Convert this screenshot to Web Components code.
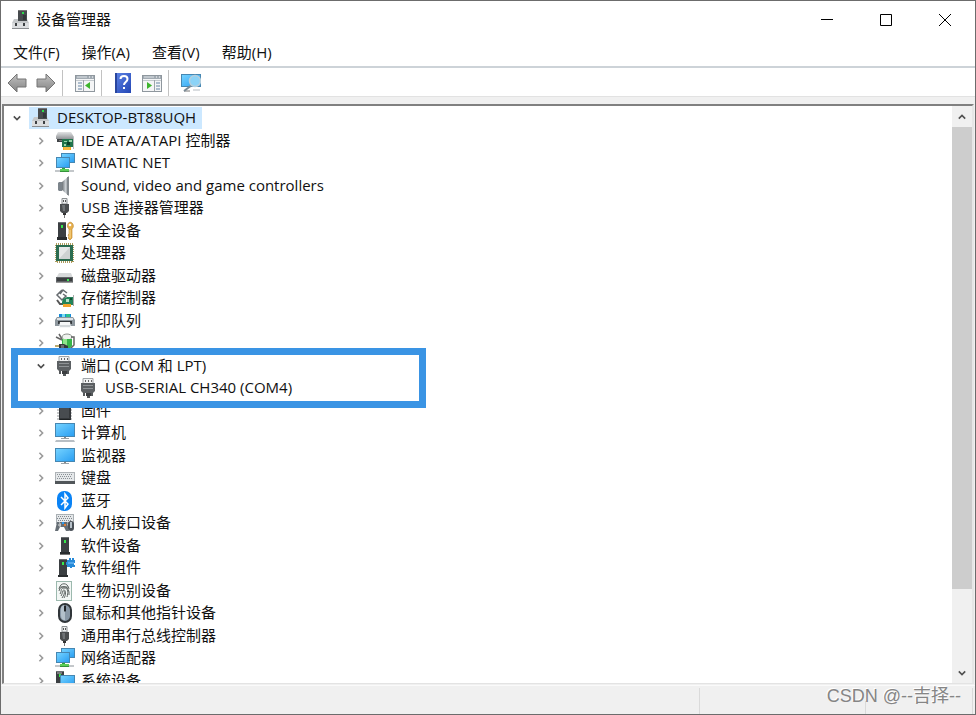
<!DOCTYPE html>
<html lang="zh-CN">
<head>
<meta charset="utf-8">
<title>设备管理器</title>
<style>
  html, body { height: 100%; margin: 0; }
  body { font: 15px/22px "Open Sans", "Noto Sans CJK SC", sans-serif; color: #111; overflow: hidden; }
</style>
</head>
<body>
<dm-window>
  <dm-titlebar slot="title">设备管理器</dm-titlebar>
  <dm-menubar slot="menu">
    <dm-menu>文件(F)</dm-menu>
    <dm-menu>操作(A)</dm-menu>
    <dm-menu>查看(V)</dm-menu>
    <dm-menu>帮助(H)</dm-menu>
  </dm-menubar>
  <dm-toolbar slot="tools"></dm-toolbar>
  <dm-tree>
    <dm-node icon="pc" open selected>DESKTOP-BT88UQH</dm-node>
    <dm-node depth="1" icon="ide">IDE ATA/ATAPI 控制器</dm-node>
    <dm-node depth="1" icon="net">SIMATIC NET</dm-node>
    <dm-node depth="1" icon="sound">Sound, video and game controllers</dm-node>
    <dm-node depth="1" icon="usb">USB 连接器管理器</dm-node>
    <dm-node depth="1" icon="security">安全设备</dm-node>
    <dm-node depth="1" icon="cpu">处理器</dm-node>
    <dm-node depth="1" icon="disk">磁盘驱动器</dm-node>
    <dm-node depth="1" icon="storage">存储控制器</dm-node>
    <dm-node depth="1" icon="printer">打印队列</dm-node>
    <dm-node depth="1" icon="battery">电池</dm-node>
    <dm-node depth="1" icon="port" open>端口 (COM 和 LPT)</dm-node>
    <dm-node depth="2" icon="port" leaf>USB-SERIAL CH340 (COM4)</dm-node>
    <dm-node depth="1" icon="firmware">固件</dm-node>
    <dm-node depth="1" icon="computer">计算机</dm-node>
    <dm-node depth="1" icon="monitor">监视器</dm-node>
    <dm-node depth="1" icon="keyboard">键盘</dm-node>
    <dm-node depth="1" icon="bluetooth">蓝牙</dm-node>
    <dm-node depth="1" icon="hid">人机接口设备</dm-node>
    <dm-node depth="1" icon="software">软件设备</dm-node>
    <dm-node depth="1" icon="component">软件组件</dm-node>
    <dm-node depth="1" icon="finger">生物识别设备</dm-node>
    <dm-node depth="1" icon="mouse">鼠标和其他指针设备</dm-node>
    <dm-node depth="1" icon="usb">通用串行总线控制器</dm-node>
    <dm-node depth="1" icon="net">网络适配器</dm-node>
    <dm-node depth="1" icon="system">系统设备</dm-node>
    <dm-highlight></dm-highlight>
  </dm-tree>
  <dm-statusbar slot="status"></dm-statusbar>
  <dm-watermark slot="mark">CSDN @--吉择--</dm-watermark>
</dm-window>

<script>
const defs = `<defs>
  <linearGradient id="blue" x1="0" y1="0" x2="1" y2="1"><stop stop-color="#74d2ff"/><stop offset="1" stop-color="#2b9ff2"/></linearGradient>
  <linearGradient id="gray" x1="0" y1="0" x2="0" y2="1"><stop stop-color="#e2e3e4"/><stop offset="1" stop-color="#909396"/></linearGradient>
  <linearGradient id="metal" x1="0" y1="0" x2="1" y2="0"><stop stop-color="#6d7378"/><stop offset=".5" stop-color="#c9ced2"/><stop offset="1" stop-color="#7c8287"/></linearGradient>
  <linearGradient id="arrow" x1="0" y1="0" x2="0" y2="1"><stop stop-color="#c4c4c4"/><stop offset=".5" stop-color="#a2a2a2"/><stop offset="1" stop-color="#858585"/></linearGradient>
  <linearGradient id="book" x1="0" y1="0" x2="1" y2="1"><stop stop-color="#5d83e6"/><stop offset="1" stop-color="#2346b4"/></linearGradient>
</defs>`;

const screen = (x, y, w, h) => `<rect x="${x}" y="${y}" width="${w}" height="${h}" fill="#4687b2"/><rect x="${x + 1}" y="${y + 1}" width="${w - 2}" height="${h - 2}" fill="url(#blue)"/>`;
const tower = (x, y, h) => `<rect x="${x}" y="${y}" width="8" height="${h}" fill="#3b3f42"/><path d="M${x} ${y}h8v1h-8z" fill="#6b6f72"/><rect x="${x + 3}" y="${y + 3}" width="2" height="3" fill="#35e84a"/>`;
const panel = `<rect x=".5" y="2.500" width="19" height="16" fill="#f4f5f6" stroke="#8f979e"/><path d="M1 3h18v3H1z" fill="#a2abb3"/><path d="M2 4h10" stroke="#dfe4e8"/><path d="M14 4h1M17 4h1" stroke="#fff"/><path d="M1 7.500h18" stroke="#c3c9ce"/>`;

const icons = {
  pc: `<path d="M7 0h9v12H7z" fill="#474b4e"/><path d="M7 0h9v1H7z" fill="#777"/><path d="M11 2h2v2h-2z" fill="#2bdd4b"/><path d="M12 5h3v5h-3z" fill="#33373a"/><path d="M3 9h4v2h9V9l2 4v6H1v-6z" fill="#c5c8ca"/><path d="M1 13h17v5H1z" fill="#dcdee0"/><path d="M1 18h17v1H1z" fill="#8a8d90"/><path d="M4 13h2v3H4zM12 13h2v3h-2z" fill="#3d4043"/>`,
  ide: `<path d="M3 1h13l3 5v2H1V5z" fill="url(#gray)"/><path d="M2 8h15v3H2z" fill="#404447"/><path d="M4 9h5v1H4z" fill="#777"/><path d="M18.500 6v12" fill="none" stroke="#b9bdc0"/><rect x="7" y="8" width="11" height="8" fill="#20744c"/><path d="M9 10h3v1H9zM14 9h3v2h-3zM9 13h2v2H9z" fill="#9ad5ac"/><path d="M12 11h3v3h-3z" fill="#0e4029"/><path d="M8 16h8v3H8z" fill="#f5a623"/><path d="M10 16v3M12 16v3M14 16v3" stroke="#fff0a0" stroke-width=".5"/>`,
  net: screen(6, 0, 14, 10) + screen(1, 4, 14, 11) + `<path d="M0 17h5v2H0zM14 17h5v2h-5z" fill="#c3c7ca"/><path d="M7 15h3v2H7z" fill="#28a53c"/><path d="M5 16h9v3H5z" fill="#5ccc58"/><path d="M5 18h9v1H5z" fill="#35933c"/>`,
  sound: `<path d="M4 6h3v9H4l-1-1V7z" fill="#7c848b"/><path d="M7 6l7-6v20l-7-6z" fill="url(#metal)"/><path d="M12 1h2v18h-2z" fill="#82888d"/>`,
  usb: `<path d="M7 .5h5V6H7z" fill="#eceeef" stroke="#8b8f92"/><path d="M8 2h1v2H8zM10 2h1v2h-1z" fill="#555"/><path d="M5 6h9v7l-2 2H7l-2-2z" fill="#4a4d4f"/><path d="M7 7h3v6H8z" fill="#6f7376"/><path d="M8 15h3v2H8z" fill="#333"/><path d="M9 17h1v3H9z" fill="#777"/>`,
  security: tower(3, 1, 15) + `<path d="M2 16h10v3H2z" fill="#292c2e"/><path d="M15 1a4 4 0 0 1 2 7v9l-2 2-2-2 1-1-1-2 1-1V8a4 4 0 0 1 1-7z" fill="#e8b04c" stroke="#b88329" stroke-width=".6"/><circle cx="15" cy="4" r="1.300" fill="#fff"/><path d="M15 9v8" stroke="#f9dc94"/>`,
  cpu: `<rect x="1" y="1" width="17" height="18" fill="none" stroke="#ad9b5c" stroke-width="2" stroke-dasharray="1 1"/><rect x="1" y="2" width="17" height="16" fill="#2b6c50"/><rect x="4" y="4" width="11" height="12" fill="#e6e8e8"/><path d="M15 4v12H4z" fill="#ced2d2"/>`,
  disk: `<path d="M4 7h12l2 5H1z" fill="#d7d9da"/><path d="M1 11h17v5H1z" fill="#606467"/><path d="M2 12h15v3H2z" fill="#3b3e40"/><path d="M12 13h2v2h-2z" fill="#3bea54"/><path d="M1 16h17v1H1z" fill="#999"/>`,
  storage: `<path d="M7 2L2 7l5 5 4-4-3-2M5 6l3-4 4 3" fill="none" stroke="#666b6f" stroke-width="1.500"/><path d="M2 12l3 4h2" fill="none" stroke="#555" stroke-width="2"/><path d="M8 11l4-2h6v8H7v-3z" fill="#24835a"/><path d="M11 11h3v3h-3z" fill="#b7e0c5"/><path d="M15 10h2v2h-2z" fill="#105134"/><path d="M8 16h8v3H8z" fill="#f3a32a"/><path d="M18.500 7v11" fill="none" stroke="#aaa"/>`,
  printer: `<path d="M4 3h12v5H4z" fill="#168bd8"/><path d="M7 3h3v3H7z" fill="#7be0f0"/><path d="M11 3h4v4h-4z" fill="#2fc08f"/><path d="M2 6h16l2 3v6H0V9z" fill="#8d969d"/><path d="M2 7h16v2H2z" fill="#dce1e4"/><path d="M3 10h14v3H3z" fill="#34393d"/><path d="M5 11h10l1 6H4z" fill="#f5f7f8"/><path d="M5 14h10v2H5z" fill="#d2d7da"/>`,
  battery: `<path d="M1 4l6 3M4 1l3 5" stroke="#666" stroke-width="1.500"/><ellipse cx="12" cy="4" rx="5" ry="3" fill="#eff3ef" stroke="#8a8f8a"/><path d="M7 6h10v7l-3 4H9l-2-3z" fill="#37b54a"/><path d="M8 6h4v7H8z" fill="#8fe58b"/><path d="M16 4h3v8l-3 3" fill="none" stroke="#666" stroke-width="1.500"/><path d="M0 13h5M0 16h5" stroke="#a48d3c" stroke-width="1.500"/><path d="M4 11h5l4 2v3l-4 2H4z" fill="#35383a"/><path d="M6 12h3v3H6z" fill="#696d70"/>`,
  port: `<path d="M4 .5h10V6H4z" fill="#f1f2f3" stroke="#a0a4a7"/><path d="M6 2h1v2H6zM9 2h1v2H9zM12 2h1v2h-1z" fill="#666"/><path d="M2 5h14v8l-2 2H4l-2-2z" fill="#5c6063"/><path d="M4 7.500h10M4 10.500h10" stroke="#8f9396"/><path d="M4 15h2v3H4zM8 15h3v5H8zM12 15h2v3h-2z" fill="#55595b"/><path d="M7 15h5v3H7z" fill="#3b3e40"/>`,
  firmware: `<path d="M2 3h15M2 6h15M2 9h15M2 12h15M2 15h15M2 18h15" stroke="#8f9395"/><rect x="4" y="0" width="12" height="19" fill="#35383b"/><path d="M5 1h9v16H5z" fill="#484c50"/><path d="M5 18h10v1H5z" fill="#1f2224"/>`,
  computer: screen(0, 0, 20, 14) + `<path d="M9 14h2v1H9z" fill="#888"/><path d="M6 15h8v1H6z" fill="#9aa0a4"/><path d="M1 17h18l1 2H0z" fill="#b7bec4"/>`,
  monitor: screen(0, 2, 20, 14) + `<path d="M9 16h2v2H9z" fill="#888"/><path d="M6 17h8v1H6z" fill="#9ba3a8"/>`,
  keyboard: `<path d="M0 4h20v11H0z" fill="#aeb3b7"/><path d="M1 5h18v8H1z" fill="#e5e8ea"/><path d="M2 6.500h16M3 8.500h14M2 10.500h16" stroke="#8a9095" stroke-dasharray="1 1"/><path d="M0 13h20v3H0z" fill="#51565a"/>`,
  bluetooth: `<rect x="2" y="0" width="15" height="20" rx="7" fill="#0a83f5"/><path d="M6 6l7 7-3 4V3l3 4-7 7" fill="none" stroke="#fff" stroke-width="1.500"/>`,
  hid: `<path d="M1 1h18v10H1z" fill="#aab0b4"/><path d="M2 2h16v7H2z" fill="#e5e8ea"/><path d="M3 3.500h14M2 5.500h16M3 7.500h14" stroke="#82888d" stroke-dasharray="1 1"/><path d="M2 9h10l2 9h-3l-2-4H5l-2 4H0z" fill="#666e75"/><path d="M4 10h1v4M3 12h3" stroke="#e1e4e6"/><path d="M7 9h2v2H7z" fill="#2f9cf0"/><path d="M9 11h2v2H9z" fill="#e57d32"/><rect x="13" y="8" width="6" height="10" rx="3" fill="#495057"/><path d="M15 9h2v6h-2z" fill="#b8c2ca"/>`,
  software: tower(6, 1, 16) + `<path d="M5 16h10v3H5z" fill="#2a2d2f"/><path d="M5 18h10v1H5z" fill="#777"/>`,
  component: tower(4, 1, 16) + `<path d="M3 17h10v2H3z" fill="#2a2d2f"/><path d="M12 2h2V0h2v2h1V0h2v2h1v3h-1v2h1v2h-3v1h-2V9h-3V7h-1V4h1z" fill="#278ad8"/><path d="M13 5h6" stroke="#82c6ff"/>`,
  finger: `<rect x="1.500" y=".5" width="15" height="19" fill="#f3f7f5" stroke="#9cb9ae"/><g fill="none" stroke="#5d6462"><path d="M4 8c1-7 9-7 10 0M5 6h8M4 10c1-6 9-6 10 1v3M5 13c2-3 0-6 4-6 5 0 4 5 3 9M6 15c2-3 1-6 3-6s2 5 0 8M9 10c1 2 0 4-2 7"/></g>`,
  mouse: `<rect x="4" y="1" width="12" height="18" rx="6" fill="#8796a5" stroke="#303539" stroke-width="2"/><path d="M6 5c0-2 2-3 4-3v15c-3 0-4-2-4-5z" fill="#b3c0cb"/><path d="M10 1v8" stroke="#30363b"/><rect x="9" y="3" width="2" height="5" fill="#202428"/>`,
  system: tower(1, 0, 17) + `<path d="M2 2h5" stroke="#bbb"/>` + screen(5, 4, 15, 11),
  back: `<path d="M1 10l9-9v5h9v8h-9v5z" fill="url(#arrow)" stroke="#747474"/>`,
  forward: `<path d="M19 10l-9-9v5H1v8h9v5z" fill="url(#arrow)" stroke="#747474"/>`,
  hide: panel + `<path d="M3 10h4M3 13h4M3 16h4" stroke="#6685a5"/><path d="M8.500 7v11" stroke="#9da5ab"/><path d="M15 9v7l-5-3.500z" fill="#3eb52d"/>`,
  show: panel + `<path d="M14 10h4M14 13h4M14 16h4" stroke="#6685a5"/><path d="M12.500 7v11" stroke="#9da5ab"/><path d="M5 9v7l5-3.500z" fill="#3eb52d"/>`,
  help: `<path d="M1 0h16v20H1z" fill="url(#book)"/><path d="M1 0h2v20H1z" fill="#2a469e"/><path d="M6.500 6c0-4 7-4 7 0 0 3-3.500 3-3.500 6" fill="none" stroke="#fff" stroke-width="2"/><path d="M9 14h2v2H9z" fill="#fff"/>`,
  scan: screen(0, 1, 20, 13) + `<path d="M3 18h6" stroke="#777"/><path d="M11 12l-8 6" stroke="#7a8a95" stroke-width="2"/><circle cx="14" cy="8" r="5.500" fill="#8bd3f7" stroke="#b4cfde" stroke-width="1.500"/><path d="M12 17h7" stroke="#b5bcc1"/>`
};

const define = (name, html, setup) => {
  const template = document.createElement('template');
  template.innerHTML = html;
  customElements.define(name, class extends HTMLElement {
    connectedCallback() {
      if (this.shadowRoot) return;
      this.attachShadow({ mode: 'open' }).append(template.content.cloneNode(true));
      if (setup) setup(this, this.shadowRoot);
    }
  });
};

define('dm-icon', `<style>:host{display:block;flex:none;width:20px;height:20px}svg{display:block;width:100%;height:100%}</style><svg viewBox="0 0 20 20" aria-hidden="true"></svg>`,
  (host, root) => { root.querySelector('svg').innerHTML = defs + icons[host.getAttribute('name')]; });

define('dm-window', `<style>
  :host{display:flex;flex-direction:column;position:relative;box-sizing:border-box;height:100vh;border:1px solid #6c6c6c;background:#fff}
  main{flex:1;min-height:0;display:flex;flex-direction:column;background:#f0f0f0;padding:7px 1px 1px}
  ::slotted(dm-tree){flex:1;min-height:0}
</style><slot name="title"></slot><slot name="menu"></slot><slot name="tools"></slot><main><slot></slot></main><slot name="status"></slot><slot name="mark"></slot>`);

define('dm-titlebar', `<style>
  :host{display:flex;align-items:center;height:38px;padding:0 1px 0 10px}
  h1{flex:1;margin:0;padding:0 0 2px 5px;font:inherit}
  .buttons{display:flex;gap:1px}
  button{width:58px;height:38px;border:0;padding:0;background:none;display:grid;place-items:center}
  svg{width:12px;height:12px;fill:none;stroke:#000}
</style><dm-icon name="pc"></dm-icon><h1><slot></slot></h1><div class="buttons">
<button aria-label="最小化"><svg viewBox="0 0 12 12"><path d="M0 5.500h12"/></svg></button>
<button aria-label="最大化"><svg viewBox="0 0 12 12"><path d="M.5 .5h11v11H.5z"/></svg></button>
<button aria-label="关闭"><svg viewBox="0 0 12 12"><path d="M0 0l12 12M12 0L0 12"/></svg></button></div>`);

define('dm-menubar', `<style>:host{display:flex;align-items:center;gap:22px;height:25px;padding:0 12px 2px;border-bottom:2px solid #cdd3d8}</style><slot></slot>`,
  host => host.setAttribute('role', 'menubar'));
define('dm-menu', `<style>:host{display:block}button{font:inherit;color:inherit;border:0;padding:0;background:none;white-space:nowrap}</style><button role="menuitem"><slot></slot></button>`);

define('dm-toolbar', `<style>
  :host{display:flex;align-items:center;height:26px;padding:2px 0 0 6px;border-bottom:1px solid #e2e2e2}
  button{display:block;border:0;background:none;padding:0}
  .nav{display:flex;gap:9px}
  .group{display:flex;gap:8px;padding:0 6px 0 12px;border-left:1px solid #c2c2c2;height:26px;align-items:center;box-sizing:border-box}
  .nav+.group{margin-left:6px}
</style>
<div class="nav"><button aria-label="后退"><dm-icon name="back"></dm-icon></button><button aria-label="前进"><dm-icon name="forward"></dm-icon></button></div>
<div class="group"><button aria-label="显示/隐藏控制台树"><dm-icon name="hide"></dm-icon></button></div>
<div class="group"><button aria-label="帮助"><dm-icon name="help"></dm-icon></button><button aria-label="显示/隐藏操作窗格"><dm-icon name="show"></dm-icon></button></div>
<div class="group"><button aria-label="扫描检测硬件改动"><dm-icon name="scan"></dm-icon></button></div>`);

define('dm-tree', `<style>
  :host{display:flex;border:2px solid;border-color:#808080 #e6e6e6 #e3e3e3 #808080;border-bottom-width:1px;background:#fff}
  .list{flex:1;min-width:0;overflow:hidden;position:relative;display:grid;grid-template-rows:repeat(13,22px 23px);align-content:start;margin-top:1px}
</style><div class="list" role="tree"><slot></slot></div><dm-scrollbar></dm-scrollbar>`);

define('dm-node', `<style>
  :host{display:flex;align-items:center;gap:4px;padding-left:calc(5px + 24px * var(--depth));white-space:nowrap;min-width:0}
  button{flex:none;width:16px;height:16px;border:0;padding:0;background:none;display:grid;place-items:center}
  svg{width:8px;height:8px;fill:none;stroke:#9a9a9a;stroke-width:2}
  :host([open]) svg{stroke:#505050;transform:rotate(90deg)}
  :host([leaf]) button{visibility:hidden}
  .label{display:flex;align-items:center;gap:6px;align-self:stretch;padding:0 6px 0 2px}
  .text{padding-bottom:2px}
  :host([selected]) .label{background:#cce8ff}
</style><button aria-label="展开或折叠"><svg viewBox="0 0 10 10"><path d="M3 1l4 4-4 4"/></svg></button><span class="label"><dm-icon></dm-icon><span class="text"><slot></slot></span></span>`,
  (host, root) => {
    host.setAttribute('role', 'treeitem');
    host.style.setProperty('--depth', host.getAttribute('depth') || 0);
    const icon = document.createElement('dm-icon');
    icon.setAttribute('name', host.getAttribute('icon'));
    root.querySelector('dm-icon').replaceWith(icon);
  });

/* Outline around the ports group and its child row. */
define('dm-highlight', `<style>:host{position:absolute;grid-row:12/14;top:-6px;bottom:-9px;left:7px;width:415px;box-sizing:border-box;border:7px solid #3a94e4;pointer-events:none}</style>`);

define('dm-scrollbar', `<style>
  :host{display:flex;flex-direction:column;width:20px;background:#f0f0f0;flex:none}
  button{height:21px;border:0;padding:0;background:none;display:grid;place-items:center}
  svg{width:8px;height:8px;fill:none;stroke:#505050;stroke-width:2}
  .track{flex:1;display:flex;flex-direction:column}.thumb{flex:19;background:#cdcdcd}.rest{flex:3}
</style><button aria-label="向上滚动"><svg viewBox="0 0 10 10"><path d="M1 7l4-4 4 4"/></svg></button><div class="track"><div class="thumb"></div><div class="rest"></div></div><button aria-label="向下滚动"><svg viewBox="0 0 10 10"><path d="M1 3l4 4 4-4"/></svg></button>`);

define('dm-statusbar', `<style>
  :host{display:flex;height:26px;padding:2px 2px 0 0;background:#f0f0f0;border-top:1px solid #fafafa}
  span{border-right:1px solid #dadada;box-sizing:border-box}
  .main{flex:1}.mid{width:166px}.end{width:107px}
</style><span class="main"></span><span class="mid"></span><span class="end"></span>`);

define('dm-watermark', `<style>:host{position:absolute;right:14px;bottom:6px;font:18px/24px "Liberation Sans","Noto Sans CJK SC",sans-serif;color:#858585;text-shadow:-1px -1px 0 #fff;white-space:nowrap;pointer-events:none}</style><slot></slot>`);
</script>
</body>
</html>
